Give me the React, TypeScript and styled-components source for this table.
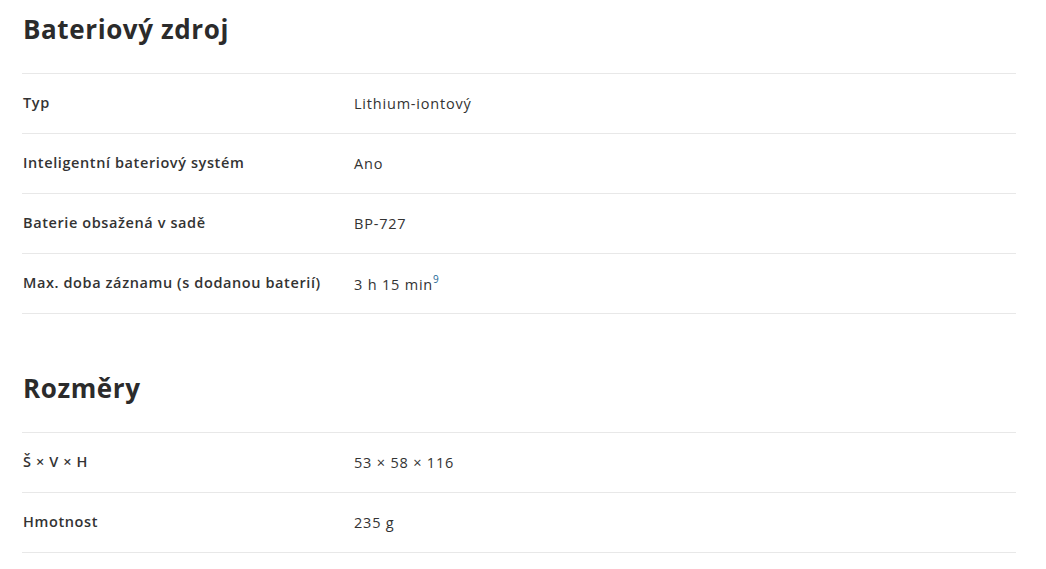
import React from "react"
import styled, { createGlobalStyle } from "styled-components"

const GlobalStyle = createGlobalStyle`
  body {
    margin: 0;
    background: #ffffff;
    font-family: "Open Sans", "Liberation Sans", sans-serif;
    color: #333333;
  }
`

const Page = styled.div`
  padding: 0 30px 0 22px;
`

const Section = styled.section`
  & + & {
    margin-top: 45px;
  }
`

const Heading = styled.h2`
  margin: 0;
  padding: 11px 0 26px 1px;
  font-size: 26px;
  line-height: 36px;
  font-weight: 700;
  letter-spacing: 0.6px;
  color: #2b2b2b;
`

const SpecList = styled.dl`
  margin: 0;
  border-top: 1px solid #e8e8e8;
`

const Row = styled.div`
  display: grid;
  grid-template-columns: 332px 1fr;
  height: 59px;
  align-items: center;
  border-bottom: 1px solid #e8e8e8;
`

const Label = styled.dt`
  padding-left: 1px;
  padding-bottom: 2px;
  font-size: 14.5px;
  font-weight: 600;
  letter-spacing: 0.6px;
  color: #333333;
`

const Value = styled.dd`
  margin: 0;
  font-size: 14.5px;
  font-weight: 400;
  letter-spacing: 0.8px;
  color: #333333;
`

const Note = styled.sup`
  font-size: 10px;
  color: #1d6a96;
  position: relative;
  top: -1px;
`

type Spec = { label: string; value: string; note?: string }

const sections: { title: string; specs: Spec[] }[] = [
  {
    title: "Bateriový zdroj",
    specs: [
      { label: "Typ", value: "Lithium-iontový" },
      { label: "Inteligentní bateriový systém", value: "Ano" },
      { label: "Baterie obsažená v sadě", value: "BP-727" },
      { label: "Max. doba záznamu (s dodanou baterií)", value: "3 h 15 min", note: "9" },
    ],
  },
  {
    title: "Rozměry",
    specs: [
      { label: "Š × V × H", value: "53 × 58 × 116" },
      { label: "Hmotnost", value: "235 g" },
    ],
  },
]

const App: React.FC = () => {
  return (
    <>
      <GlobalStyle />
      <Page>
        {sections.map((section) => (
          <Section key={section.title}>
            <Heading>{section.title}</Heading>
            <SpecList>
              {section.specs.map((spec) => (
                <Row key={spec.label}>
                  <Label>{spec.label}</Label>
                  <Value>
                    {spec.value}
                    {spec.note && <Note>{spec.note}</Note>}
                  </Value>
                </Row>
              ))}
            </SpecList>
          </Section>
        ))}
      </Page>
    </>
  )
}

export default App
